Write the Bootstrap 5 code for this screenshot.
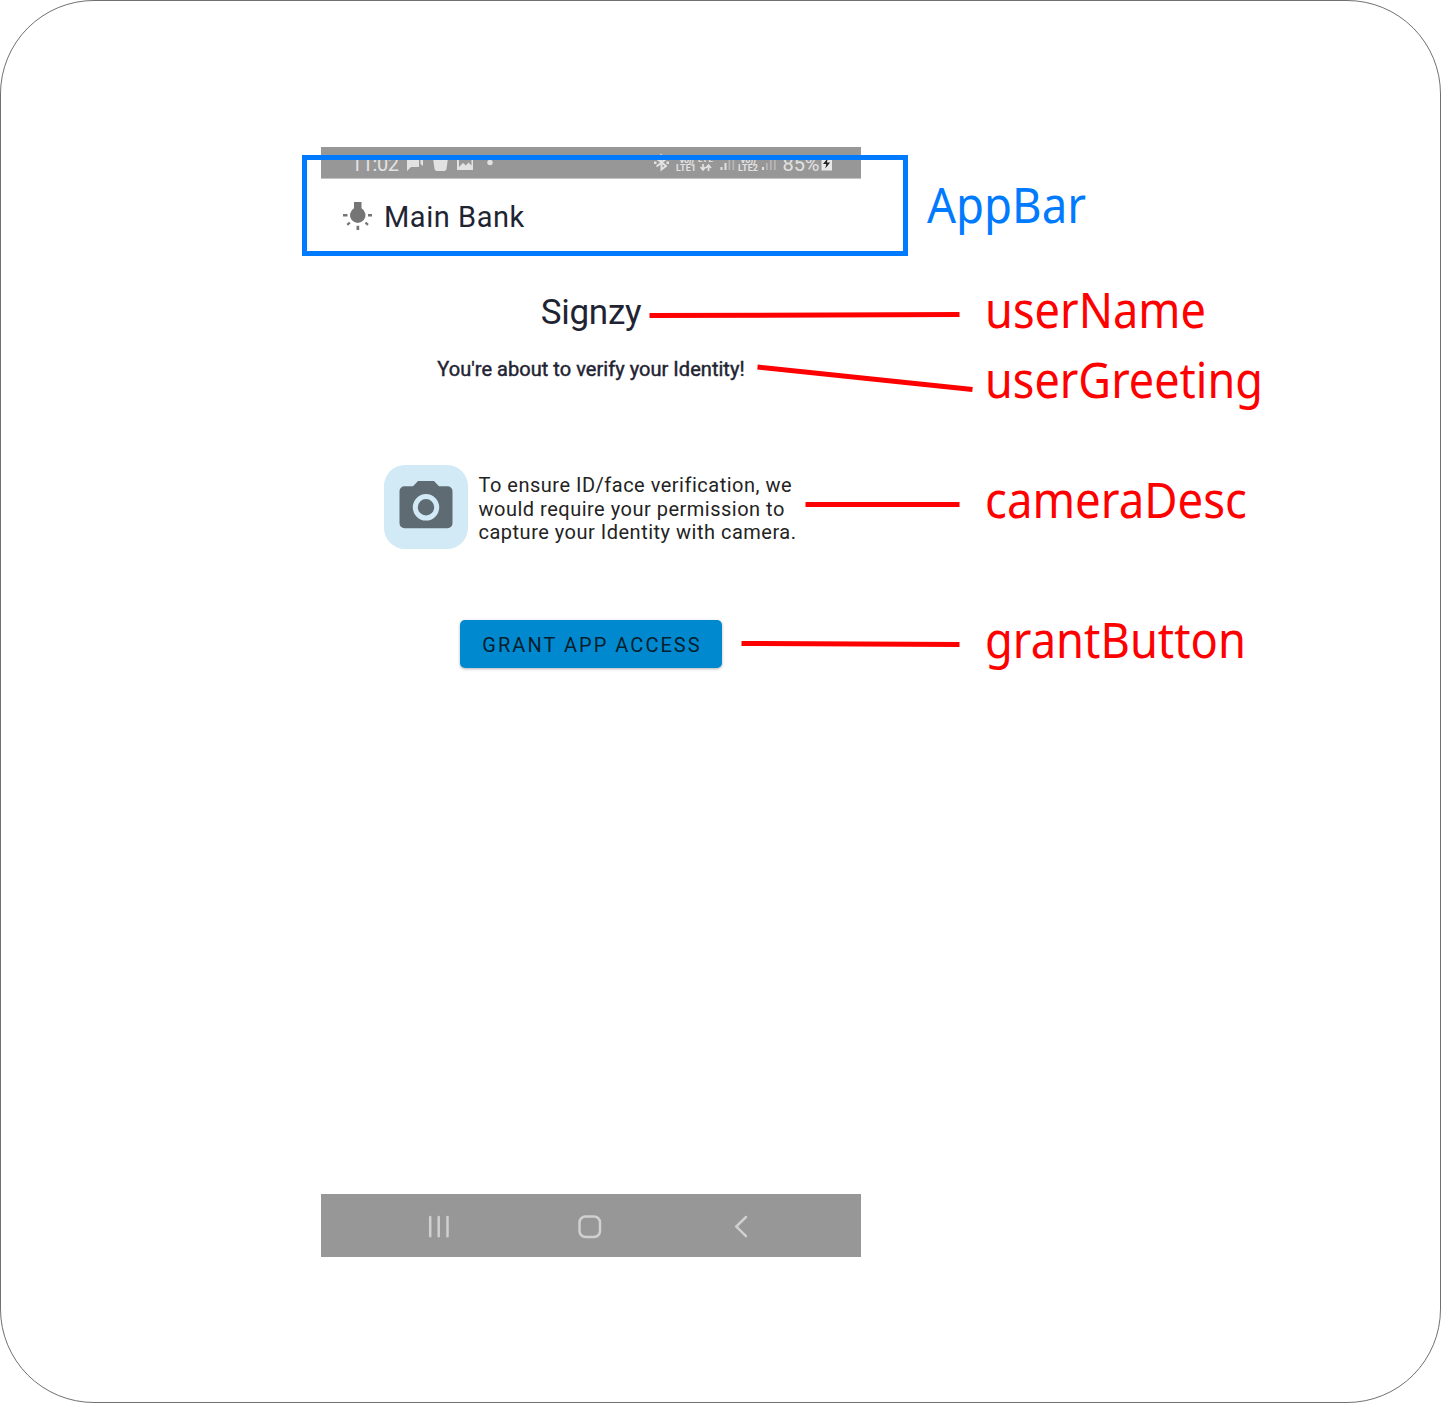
<!DOCTYPE html>
<html lang="en">
<head>
<meta charset="utf-8">
<title>Main Bank</title>
<link href="https://cdn.jsdelivr.net/npm/bootstrap@5.3.0/dist/css/bootstrap.min.css" rel="stylesheet">
<style>
body{background:#fff;font-family:Roboto,"Liberation Sans",sans-serif;color:#1f2433}
.sheet{width:1441px;height:1403px;border:1px solid #707070;border-radius:94px;padding:146px 0 0 320px;overflow:hidden}
.phone{width:540px;height:1110px}
.statusbar{height:32px;background:#979797;border-bottom:1px solid #c4c4c4;color:#e2e2e2;padding-left:31px;padding-right:28px}
.statusbar svg text{font-family:Roboto,sans-serif;fill:#e2e2e2;font-weight:700}
.titlebar{height:73px;padding:2px 0 0 22px}
.bank{font-size:29px;line-height:34px;letter-spacing:.55px;margin-left:12px;padding-top:1px}
.uname{font-size:35px;line-height:42px;margin-top:40px;letter-spacing:-.25px}
.greet{font-size:20px;line-height:24px;margin-top:23px;letter-spacing:.04px;-webkit-text-stroke:.45px #1f2433;white-space:nowrap}
.perm{margin:84px 0 0 63px}
.camtile{width:84px;height:84px;border-radius:21px;background:#d2e9f6}
.desc{font-size:20px;line-height:23.6px;letter-spacing:.5px;color:#232323;margin-left:10.5px;white-space:nowrap;padding-top:5px}
.grant{width:262px;height:48px;margin:71px auto 0;border:0;border-radius:5px;background:#0089cf;color:#061e2e;font-size:20px;letter-spacing:2.03px;padding:2px 0 0 2px;box-shadow:0 1px 3px rgba(0,0,0,.3);white-space:nowrap}
.navkeys{height:63px;background:#979797}
.notes{left:0;top:0;pointer-events:none}
.notes text{font-family:"Noto Sans","Open Sans",sans-serif;font-size:48.5px}
</style>
<script src="https://cdn.jsdelivr.net/npm/bootstrap@5.3.0/dist/js/bootstrap.bundle.min.js"></script>
</head>
<body>
<main class="sheet position-relative">
  <div class="phone d-flex flex-column">
    <header class="statusbar d-flex justify-content-between flex-shrink-0">
      <svg width="150" height="31" viewBox="352 147 150 31">
        <text x="351" y="171" font-size="20" style="font-weight:400" textLength="48">11:02</text>
        <path d="M407 155h12v12h-8l-4 4z" fill="#e2e2e2"/>
        <path d="M420.500 155h2.500v11l-2.500-2z" fill="#e2e2e2"/>
        <path d="M433 158h15l-1.500 11q-.4 2-2.500 2h-7q-2.100 0-2.500-2z" fill="#e2e2e2"/>
        <path fill-rule="evenodd" d="M457 155h16v15h-16zM459 167l4-4 3 2.500 2.500-3 3 3v-8h-12.500z" fill="#e2e2e2"/>
        <circle cx="490" cy="162.500" r="2.700" fill="#e2e2e2"/>
      </svg>
      <svg width="179" height="31" viewBox="654 147 179 31">
        <path d="M656.500 158.500l9.500 7.500-4.500 3.500v-14l4.500 3.500-9.500 7.500" fill="none" stroke="#e2e2e2" stroke-width="2"/>
        <path d="M654 161.500h2.500v2.500h-2.500zM666.500 161.500h2.500v2.500h-2.500z" fill="#e2e2e2"/>
        <text x="679" y="162.500" font-size="9" textLength="15">Vo))</text>
        <text x="698" y="161.500" font-size="8" textLength="15">LTE</text>
        <text x="676" y="171" font-size="9" textLength="20">LTE1</text>
        <path d="M703 164v6M700.500 167l2.500 3 2.500-3M708.500 171v-6M706 168l2.500-3 2.500 3" fill="none" stroke="#e2e2e2" stroke-width="1.700"/>
        <path d="M720.500 167h2v3h-2zM724.500 163h2v7h-2z" fill="#e2e2e2"/><path d="M728.500 159h1.700v11h-1.700zM732.500 157h1.700v13h-1.700z" fill="#b7b7b7"/>
        <text x="740" y="162.500" font-size="9" textLength="16">Vo))</text>
        <text x="738" y="171" font-size="9" textLength="20">LTE2</text>
        <path d="M762 167h2v3h-2z" fill="#e2e2e2"/><path d="M766 163h1.700v7h-1.700zM770 160h1.700v10h-1.700zM774 157h1.700v13h-1.700z" fill="#b7b7b7"/>
        <text x="782.500" y="171" font-size="20" style="font-weight:400" textLength="37">85%</text>
        <path d="M821.500 156h10.500v14.500h-10.500z" fill="#e8e8e8"/><path d="M828 158l-5 6h3.300l-1 4.500 4.800-6h-3.300z" fill="#222"/>
      </svg>
    </header>
    <div class="titlebar d-flex align-items-center flex-shrink-0">
      <svg width="29" height="29" viewBox="343 202 29 29" fill="#757575">
        <path d="M354 202h7.500v6.300a7.800 7.800 0 1 1-7.500 0z"/>
        <path d="M343 214h4.500v2.500h-4.500zM368 214h4v2.500h-4zM356.500 225.700h2.700v4.300h-2.700z"/>
        <path d="M349.800 222.500l-2.500 2.300M365.500 222.500l2.500 2.300" stroke="#757575" stroke-width="2.300"/>
      </svg>
      <span class="bank">Main Bank</span>
    </div>
    <section class="text-center">
      <div class="uname">Signzy</div>
      <div class="greet">You're about to verify your Identity!</div>
      <div class="perm d-flex align-items-center text-start">
        <div class="camtile flex-shrink-0">
          <svg class="d-block" width="84" height="84" viewBox="384 465 84 84">
            <path d="M418 481h16l5 5.300h8.500a5 5 0 0 1 5 5v32a5 5 0 0 1-5 5h-43a5 5 0 0 1-5-5v-32a5 5 0 0 1 5-5h8.500z" fill="#5f6b73"/>
            <circle cx="426" cy="507.300" r="10.700" fill="none" stroke="#d2e9f6" stroke-width="5"/>
          </svg>
        </div>
        <div class="desc">To ensure ID/face verification, we<br>would require your permission to<br>capture your Identity with camera.</div>
      </div>
      <button class="btn grant d-block">GRANT APP ACCESS</button>
    </section>
    <footer class="navkeys mt-auto flex-shrink-0">
      <svg class="d-block" width="540" height="63" viewBox="321 1194 540 63" fill="none" stroke="#d0d0d0" stroke-width="2.500" stroke-linecap="round">
        <path d="M430.200 1217v19.300M438.700 1217v19.300M447.500 1217v19.300"/>
        <rect x="579.500" y="1216.500" width="20.500" height="20.500" rx="6"/>
        <path d="M746 1217l-9.700 9.600 9.700 9.600"/>
      </svg>
    </footer>
  </div>
  <svg class="notes position-absolute" width="1439" height="1401" viewBox="1 1 1439 1401">
    <rect x="304.500" y="157.500" width="601" height="96" fill="none" stroke="#007aff" stroke-width="5"/>
    <text x="927" y="222.500" fill="#007aff" textLength="159" lengthAdjust="spacingAndGlyphs">AppBar</text>
    <g stroke="#f00" stroke-width="5">
      <path d="M649.500 315.500L959.500 314.500M757.500 367L972.500 389.500M805.500 504.500H959.500M741.500 643.500L959.500 644.500"/>
    </g>
    <g fill="#f00">
      <text x="985" y="327.500" textLength="221" lengthAdjust="spacingAndGlyphs">userName</text>
      <text x="985" y="397.500" textLength="278" lengthAdjust="spacingAndGlyphs">userGreeting</text>
      <text x="985" y="517.500" textLength="262" lengthAdjust="spacingAndGlyphs">cameraDesc</text>
      <text x="985" y="657.500" textLength="261" lengthAdjust="spacingAndGlyphs">grantButton</text>
    </g>
  </svg>
</main>
</body>
</html>
